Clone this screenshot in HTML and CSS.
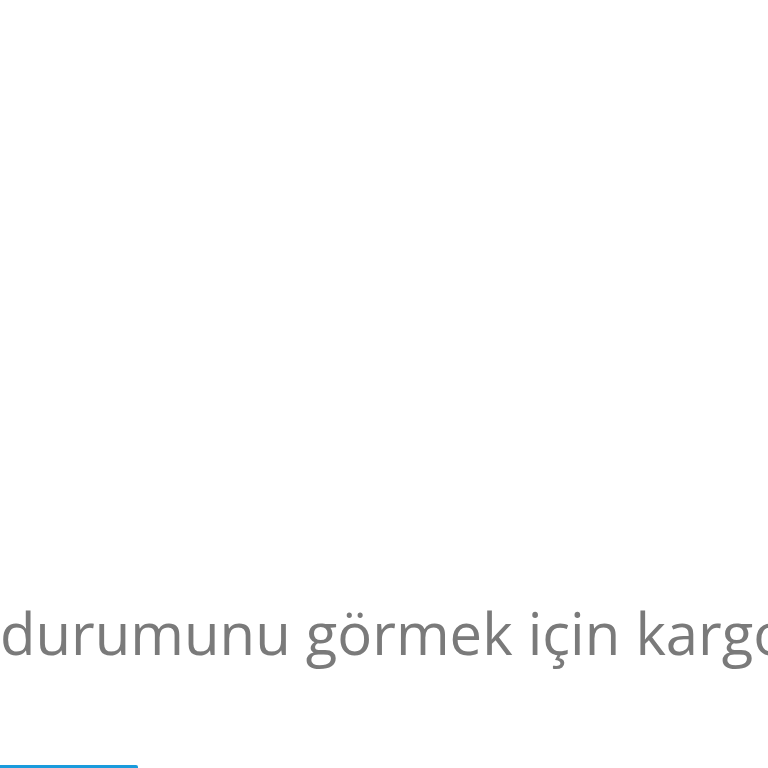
FILE: index.html
```html
<!DOCTYPE html>
<html lang="tr">
<head>
<meta charset="utf-8">
<link rel="stylesheet" href="styles.css">
</head>
<body>
<div class="page">
  <p class="lead">durumunu görmek için kargo</p>
  <div class="bar"></div>
</div>
</body>
</html>
```
FILE: styles.css
```css
html, body {
  margin: 0;
  padding: 0;
  background: #ffffff;
}
.page {
  width: 768px;
  height: 768px;
  overflow: hidden;
  display: flex;
  flex-direction: column;
  justify-content: flex-end;
}
.lead {
  margin: 0 0 94px 0;
  font-family: "Open Sans", "Noto Sans", sans-serif;
  font-size: 58px;
  line-height: 76px;
  color: #7a7a7a;
  white-space: nowrap;
  overflow: hidden;
}
.bar {
  width: 138px;
  height: 4px;
  margin-bottom: -1px;
  background: #1a9bdc;
  border-radius: 0 2px 0 0;
}
```
